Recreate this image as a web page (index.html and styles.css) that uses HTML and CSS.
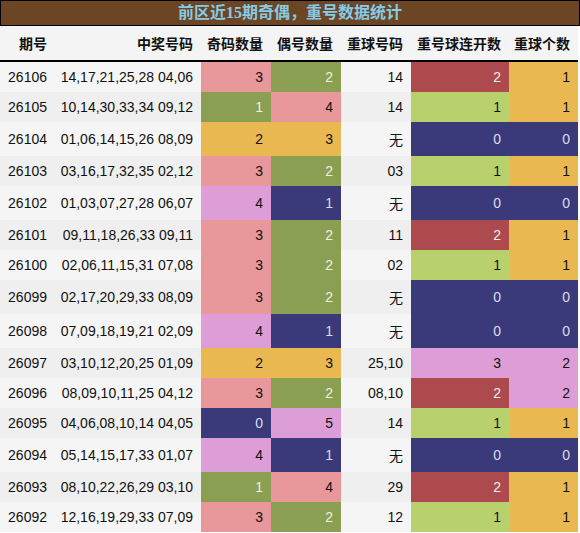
FILE: index.html
```html
<!DOCTYPE html>
<html lang="zh">
  <head>
    <meta charset="UTF-8" />
    <meta name="viewport" content="width=device-width, initial-scale=1.0" />
    <title>前区近15期奇偶，重号数据统计</title>
    <link rel="stylesheet" href="styles.css">
  </head>
  <body>
    <div class="title-bar">前区近15期奇偶，重号数据统计</div>
    <table class="stats">
      <colgroup>
        <col class="c-issue" />
        <col class="c-nums" />
        <col class="c-odd" />
        <col class="c-even" />
        <col class="c-rep" />
        <col class="c-streak" />
        <col class="c-count" />
      </colgroup>
      <thead>
        <tr>
          <th>期号</th>
          <th>中奖号码</th>
          <th>奇码数量</th>
          <th>偶号数量</th>
          <th>重球号码</th>
          <th>重号球连开数</th>
          <th>重球个数</th>
        </tr>
      </thead>
      <tbody>
        <tr>
          <td>26106</td><td>14,17,21,25,28 04,06</td>
          <td class="pink">3</td><td class="olive">2</td><td>14</td>
          <td class="red">2</td><td class="gold">1</td>
        </tr>
        <tr>
          <td>26105</td><td>10,14,30,33,34 09,12</td>
          <td class="olive">1</td><td class="pink">4</td><td>14</td>
          <td class="lime">1</td><td class="gold">1</td>
        </tr>
        <tr>
          <td>26104</td><td>01,06,14,15,26 08,09</td>
          <td class="gold">2</td><td class="gold">3</td><td>无</td>
          <td class="navy">0</td><td class="navy">0</td>
        </tr>
        <tr>
          <td>26103</td><td>03,16,17,32,35 02,12</td>
          <td class="pink">3</td><td class="olive">2</td><td>03</td>
          <td class="lime">1</td><td class="gold">1</td>
        </tr>
        <tr>
          <td>26102</td><td>01,03,07,27,28 06,07</td>
          <td class="lilac">4</td><td class="navy">1</td><td>无</td>
          <td class="navy">0</td><td class="navy">0</td>
        </tr>
        <tr>
          <td>26101</td><td>09,11,18,26,33 09,11</td>
          <td class="pink">3</td><td class="olive">2</td><td>11</td>
          <td class="red">2</td><td class="gold">1</td>
        </tr>
        <tr>
          <td>26100</td><td>02,06,11,15,31 07,08</td>
          <td class="pink">3</td><td class="olive">2</td><td>02</td>
          <td class="lime">1</td><td class="gold">1</td>
        </tr>
        <tr>
          <td>26099</td><td>02,17,20,29,33 08,09</td>
          <td class="pink">3</td><td class="olive">2</td><td>无</td>
          <td class="navy">0</td><td class="navy">0</td>
        </tr>
        <tr>
          <td>26098</td><td>07,09,18,19,21 02,09</td>
          <td class="lilac">4</td><td class="navy">1</td><td>无</td>
          <td class="navy">0</td><td class="navy">0</td>
        </tr>
        <tr>
          <td>26097</td><td>03,10,12,20,25 01,09</td>
          <td class="gold">2</td><td class="gold">3</td><td>25,10</td>
          <td class="lilac">3</td><td class="lilac">2</td>
        </tr>
        <tr>
          <td>26096</td><td>08,09,10,11,25 04,12</td>
          <td class="pink">3</td><td class="olive">2</td><td>08,10</td>
          <td class="red">2</td><td class="lilac">2</td>
        </tr>
        <tr>
          <td>26095</td><td>04,06,08,10,14 04,05</td>
          <td class="navy">0</td><td class="lilac">5</td><td>14</td>
          <td class="lime">1</td><td class="gold">1</td>
        </tr>
        <tr>
          <td>26094</td><td>05,14,15,17,33 01,07</td>
          <td class="lilac">4</td><td class="navy">1</td><td>无</td>
          <td class="navy">0</td><td class="navy">0</td>
        </tr>
        <tr>
          <td>26093</td><td>08,10,22,26,29 03,10</td>
          <td class="olive">1</td><td class="pink">4</td><td>29</td>
          <td class="red">2</td><td class="gold">1</td>
        </tr>
        <tr>
          <td>26092</td><td>12,16,19,29,33 07,09</td>
          <td class="pink">3</td><td class="olive">2</td><td>12</td>
          <td class="lime">1</td><td class="gold">1</td>
        </tr>
      </tbody>
    </table>
  </body>
</html>
```

FILE: styles.css
```css
body {
  margin: 0;
  width: 580px;
  background-color: #fff;
  font-family: "Liberation Sans", "Noto Sans CJK SC", sans-serif;
  font-size: 14px;
  color: #111;
}

.title-bar {
  border: 1px solid #000;
  background-color: #6b4524;
  color: #87cbe6;
  font-family: "Liberation Serif", "Noto Sans CJK SC", serif;
  font-size: 16px;
  font-weight: bold;
  line-height: 24px;
  height: 24px;
  text-align: center;
}

.stats {
  border-collapse: collapse;
  table-layout: fixed;
  width: 578px;
}

.c-issue { width: 55px; }
.c-nums { width: 146px; }
.c-odd { width: 70px; }
.c-even { width: 70px; }
.c-rep { width: 70px; }
.c-streak { width: 98px; }
.c-count { width: 69px; }

.stats th,
.stats td {
  padding: 7px 8px 7px 0;
  text-align: right;
  white-space: nowrap;
  overflow: hidden;
}

.stats th {
  background-color: #f4f4f4;
  font-weight: bold;
  color: #111;
  border-bottom: 2px solid #000;
}

.stats tbody tr:nth-child(odd) {
  background-color: #f5f5f5;
}
.stats tbody tr:nth-child(even) {
  background-color: #efefef;
}

/* value colours */
.stats td.pink { background-color: #e8979b; color: #111; }
.stats td.olive { background-color: #8b9f52; color: #eef0e4; }
.stats td.gold { background-color: #e9b850; color: #111; }
.stats td.lilac { background-color: #dd9ed8; color: #111; }
.stats td.navy { background-color: #3a3a7a; color: #dcdcea; }
.stats td.red { background-color: #ad4a4e; color: #f6eeee; }
.stats td.lime { background-color: #b8d16d; color: #111; }
```
